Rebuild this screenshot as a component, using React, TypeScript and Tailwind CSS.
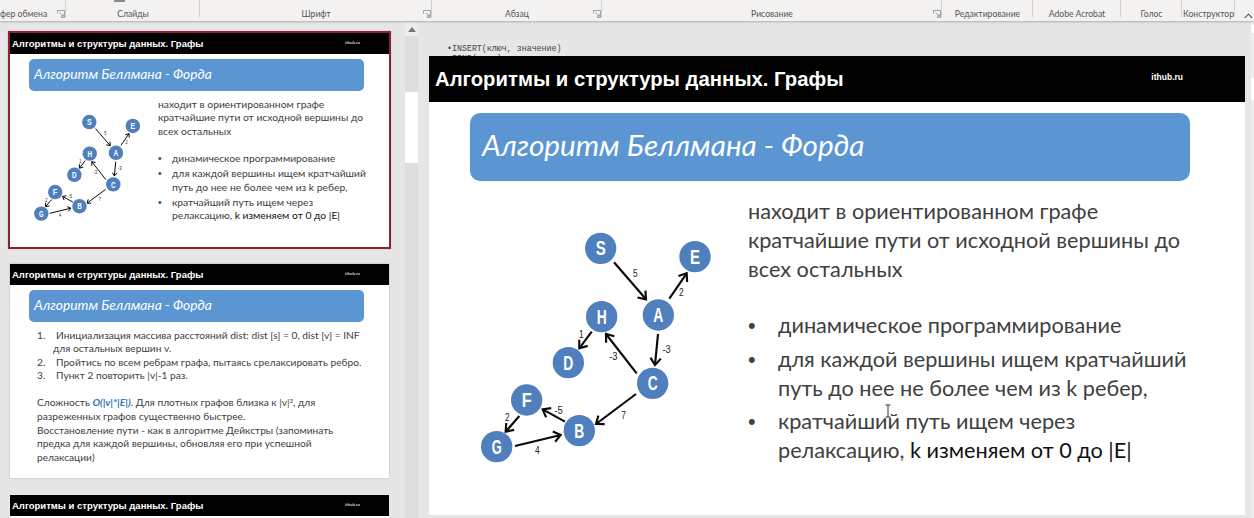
const ribbonGroups = [
  { label: "фер обмена", w: "w-[66px]", launcher: true, labelClass: "justify-start" },
  { label: "Слайды", w: "w-[134px]" },
  { label: "Шрифт", w: "w-[232px]", launcher: true },
  { label: "Абзац", w: "w-[170px]", launcher: true },
  { label: "Рисование", w: "w-[340px]", launcher: true },
  { label: "Редактирование", w: "w-[91px]" },
  { label: "Adobe Acrobat", w: "w-[88px]" },
  { label: "Голос", w: "w-[61px]" },
  { label: "Конструктор", w: "w-[53px]" },
];

const nodes = [
  ["S", 422, 85],
  ["E", 705, 110],
  ["A", 595, 285],
  ["H", 425, 290],
  ["D", 325, 428],
  ["C", 578, 490],
  ["F", 200, 540],
  ["B", 358, 632],
  ["G", 110, 680],
] as const;

const edges = [
  [462, 127, 558, 238],
  [628, 236, 680, 160],
  [594, 342, 585, 435],
  [530, 460, 438, 342],
  [395, 335, 358, 385],
  [528, 522, 408, 612],
  [315, 605, 248, 568],
  [178, 588, 137, 635],
  [165, 678, 302, 645],
];

const weights = [
  ["5", 526, 160],
  ["2", 664, 216],
  ["-3", 620, 388],
  ["-3", 460, 410],
  ["1", 364, 343],
  ["7", 491, 586],
  ["-5", 296, 570],
  ["2", 142, 591],
  ["4", 232, 690],
] as const;

function arrowHead(x1: number, y1: number, x2: number, y2: number) {
  const angle = Math.atan2(y2 - y1, x2 - x1);
  const wing = (a: number) => `${x2 - 26 * Math.cos(angle + a)},${y2 - 26 * Math.sin(angle + a)}`;
  return `${wing(0.65)} ${x2},${y2} ${wing(-0.65)}`;
}

function Graph({ className }: { className: string }) {
  return (
    <svg viewBox="0 0 840 780" className={`shrink-0 ${className}`}>
      {edges.map(([x1, y1, x2, y2]) => (
        <g key={`${x1}-${y1}`} stroke="#0a0a0a" strokeWidth="6.5" fill="none">
          <line x1={x1} y1={y1} x2={x2} y2={y2} />
          <polyline points={arrowHead(x1, y1, x2, y2)} />
        </g>
      ))}
      {weights.map(([label, x, y]) => (
        <text
          key={`${label}-${x}`}
          x={x}
          y={y + 11}
          textAnchor="middle"
          fontSize="32"
          fill="#222"
          fontFamily="Liberation Sans, sans-serif"
          textLength={label.length > 1 ? 25 : 14}
          lengthAdjust="spacingAndGlyphs"
        >
          {label}
        </text>
      ))}
      {nodes.map(([label, x, y]) => (
        <g key={label}>
          <circle cx={x} cy={y} r="47" fill="#4f7fbd" />
          <text
            x={x}
            y={y + 21}
            textAnchor="middle"
            fontSize="60"
            fontWeight="700"
            fill="#fff"
            fontFamily="Liberation Sans, sans-serif"
            textLength="30"
            lengthAdjust="spacingAndGlyphs"
          >
            {label}
          </text>
        </g>
      ))}
    </svg>
  );
}

function Header({ large = false }: { large?: boolean }) {
  return (
    <div
      className={`flex items-center justify-between bg-black font-['Liberation_Sans',sans-serif] font-bold text-white ${
        large ? "h-[46px] pl-[6px] pr-[62px] text-[20.3px]" : "h-[21px] pl-[2px] pr-[29px] text-[9.5px]"
      }`}
    >
      <span className={large ? "" : "mt-[1px]"}>Алгоритмы и структуры данных. Графы</span>
      <span className={large ? "-mt-[4px] text-[8.5px]" : "-mt-[2px] text-[4px] text-gray-300"}>ithub.ru</span>
    </div>
  );
}

function TitleBar({ large = false }: { large?: boolean }) {
  return (
    <div
      className={`flex items-center bg-[#5b96d3] italic text-white ${
        large
          ? "ml-[41px] mt-[11px] h-[68px] w-[720px] rounded-[10px] pb-[4px] pl-[12px] text-[29.7px]"
          : "ml-[19px] mt-[5px] h-[32px] w-[335px] rounded-[5px] pb-[1px] pl-[5px] text-[13.8px]"
      }`}
    >
      Алгоритм Беллмана - Форда
    </div>
  );
}

function BellmanBody({ large = false }: { large?: boolean }) {
  const row = large ? "grid grid-cols-[30px_1fr]" : "grid grid-cols-[14px_1fr]";
  const dot = "font-['Liberation_Sans',sans-serif]";
  return (
    <div className="flex items-start">
      <Graph className={large ? "ml-[31px] mt-[39px] h-[260px] w-[280px]" : "ml-[14px] mt-[18px] h-[120px] w-[130px]"} />
      <div
        className={`text-[#404040] ${
          large ? "ml-[8px] mt-[16px] text-[21.7px] leading-[29px]" : "ml-[4px] mt-[7px] text-[10.3px] leading-[13.4px]"
        }`}
      >
        <p>
          находит в ориентированном графе
          <br />
          кратчайшие пути от исходной вершины до
          <br />
          всех остальных
        </p>
        <ul className={large ? "mt-[27px] space-y-[4.5px]" : "mt-[13.5px] space-y-[2px]"}>
          <li className={row}>
            <span className={dot}>•</span>
            <span>динамическое программирование</span>
          </li>
          <li className={row}>
            <span className={dot}>•</span>
            <span>
              для каждой вершины ищем кратчайший
              <br />
              путь до нее не более чем из k ребер,
            </span>
          </li>
          <li className={row}>
            <span className={dot}>•</span>
            <span>
              кратчайший путь ищем через
              <br />
              релаксацию, <span className="text-[#111]">k изменяем от 0 до |E|</span>
            </span>
          </li>
        </ul>
      </div>
    </div>
  );
}

function DetailsBody() {
  return (
    <div className="ml-[27px] mt-[7px] text-[10.2px] leading-[13.4px] text-[#404040]">
      <ol>
        <li>
          <span className="inline-block w-[19px]">1.</span>Инициализация массива расстояний dist: dist [s] = 0, dist [v] = INF
          <br />
          <span className="inline-block w-[16px]" />
          для остальных вершин v.
        </li>
        <li>
          <span className="inline-block w-[19px]">2.</span>Пройтись по всем ребрам графа, пытаясь срелаксировать ребро.
        </li>
        <li>
          <span className="inline-block w-[19px]">3.</span>Пункт 2 повторить |v|-1 раз.
        </li>
      </ol>
      <p className="mt-[13.4px]">
        Сложность <b className="italic text-[#2e75b6]">O(|v|*|E|)</b>. Для плотных графов близка к |v|
        <span className="relative -top-[3px] text-[6px]">3</span>, для
        <br />
        разреженных графов существенно быстрее.
        <br />
        Восстановление пути - как в алгоритме Дейкстры (запоминать
        <br />
        предка для каждой вершины, обновляя его при успешной
        <br />
        релаксации)
      </p>
    </div>
  );
}

function Launcher() {
  return (
    <svg viewBox="0 0 9 9" className="absolute right-[1px] top-[10px] h-[8px] w-[8px]" fill="none" stroke="#8a8a8a" strokeWidth="0.9">
      <path d="M0.5 4V0.5H8.5V8.5H4.5" />
      <path d="M3 3L7 7M7 4.5V7H4.5" />
    </svg>
  );
}

export default function App() {
  return (
    <div className="relative flex h-[518px] w-[1254px] flex-col overflow-hidden bg-[#e6e6e6] font-['Lato','Noto_Sans',sans-serif]">
      <div className="relative z-10 flex h-[21px] shrink-0 items-stretch bg-[#f3f2f1] shadow-[0_1px_2px_rgba(0,0,0,0.25)]">
        {ribbonGroups.map((g) => (
          <div key={g.label} className={`relative flex ${g.w} items-end justify-center pb-[1px] text-[8.6px] leading-[12px] text-[#555]`}>
            <span className={g.labelClass === "justify-start" ? "mr-auto" : ""}>{g.label}</span>
            {g.launcher && <Launcher />}
            <div className="absolute right-0 top-0 h-[17px] w-px bg-[#d2d0ce]" />
            {g.label === "Слайды" && (
              <div className="absolute left-[48px] top-0 h-[2px] w-[11px] bg-[#8a8a8a]" />
            )}
          </div>
        ))}
        <svg viewBox="0 0 10 6" className="ml-auto mr-[1px] mt-[13px] h-[6px] w-[9px]" fill="none" stroke="#444" strokeWidth="1.2">
          <path d="M1 5L5 1L9 5" />
        </svg>
      </div>

      <div className="flex min-h-0 flex-1">
        <aside className="flex w-[418px] shrink-0">
          <div className="w-[405px] overflow-hidden pl-[8px] pt-[10px]">
            <div className="h-[218px] w-[383px] border-2 border-[#8c2233] bg-white shadow-[0_0_1px_#d58a95]">
              <Header />
              <TitleBar />
              <BellmanBody />
            </div>
            <div className="ml-[2px] mt-[15px] h-[214px] w-[379px] bg-white shadow-[0_0_2px_rgba(0,0,0,0.25)]">
              <Header />
              <TitleBar />
              <DetailsBody />
            </div>
            <div className="ml-[2px] mt-[17px] h-[60px] w-[379px] bg-white">
              <Header />
            </div>
          </div>
          <div className="flex w-[13px] flex-col bg-[#dedede]">
            <div className="mt-[1px] flex h-[14px] items-center justify-center bg-[#ededed]">
              <div className="h-0 w-0 border-x-[4px] border-b-[5px] border-x-transparent border-b-[#777]" />
            </div>
            <div className="mt-[56px] h-[71px] bg-white" />
          </div>
        </aside>

        <main className="flex min-w-0 flex-1 pl-[11px]">
          <div className="w-[816px] shrink-0">
            <div className="h-[35px] overflow-hidden pl-[18px] pt-[23px] font-['Liberation_Mono',monospace] text-[8.3px] leading-[10px] text-[#444]">
              <div>•INSERT(ключ, значение)</div>
              <div>•FIND(ключ)</div>
            </div>
            <div className="h-[459px] overflow-hidden bg-white">
              <Header large />
              <TitleBar large />
              <BellmanBody large />
            </div>
          </div>
          <div className="ml-auto flex w-[3px] flex-col bg-[#eeeeee]">
            <div className="mt-[4px] h-[8px] bg-white" />
            <div className="mt-[45px] h-[22px] bg-white" />
          </div>
        </main>
      </div>

      <svg viewBox="0 0 8 14" className="absolute left-[884px] top-[404px] h-[14px] w-[8px]" fill="none" stroke="#333" strokeWidth="1">
        <path d="M1.5 1H6.5M4 1V13M1.5 13H6.5" />
      </svg>
    </div>
  );
}
